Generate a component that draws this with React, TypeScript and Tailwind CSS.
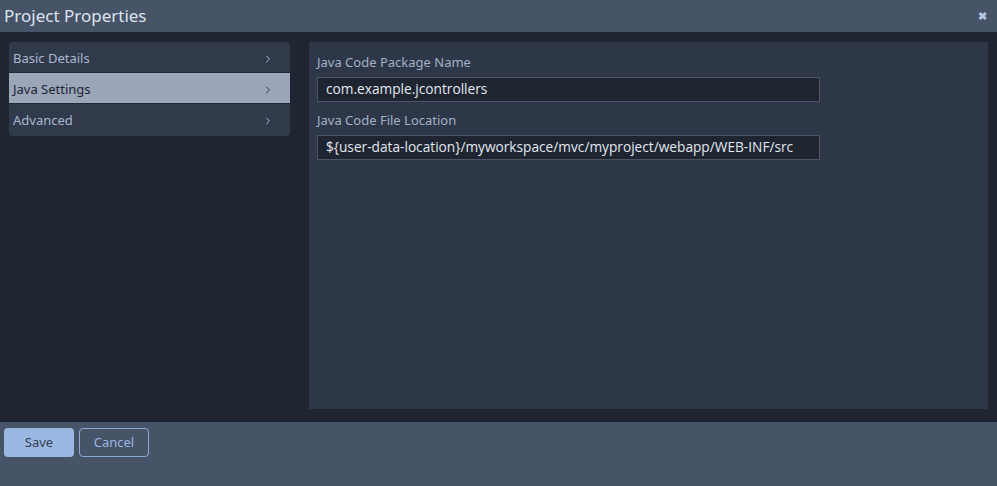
import { ChevronRight } from "lucide-react";

const menu = ["Basic Details", "Java Settings", "Advanced"];

export default function App() {
  const selected = "Java Settings";
  return (
    <div className="flex h-[486px] w-[997px] flex-col bg-[#1f2531] font-['Noto_Sans',sans-serif]">
      <div className="flex h-[32px] shrink-0 items-center justify-between bg-[#475366] pl-[4px] pr-[10px]">
        <span className="text-[17px] text-[#dce3ee]">Project Properties</span>
        <span className="text-[11px] font-bold text-[#b7c6e2]">✖</span>
      </div>

      <div className="flex flex-1 gap-[19px] pb-[13px] pl-[9px] pr-[9px] pt-[10px]">
        <div className="h-[94px] w-[281px] overflow-hidden rounded-[4px] bg-[#303a4b]">
          {menu.map((item, i) => (
            <div
              key={item}
              className={
                "flex h-[31px] items-center justify-between pl-[4px] pr-[16px] pt-[3px] text-[13px] " +
                (i < menu.length - 1 ? "border-b border-[#232a36] " : "") +
                (item === selected ? "bg-[#9ba6b9] text-[#1e2531]" : "text-[#a9b8cf]")
              }
            >
              <span>{item}</span>
              <ChevronRight size={12} strokeWidth={2} className={item === selected ? "text-[#2a3342]" : "text-[#a9b8cf]"} />
            </div>
          ))}
        </div>

        <div className="flex-1 bg-[#2d3748] px-[8px] pt-[11px]">
          <div className="text-[13px] leading-[18px] text-[#a3b1c6]">Java Code Package Name</div>
          <div className="mt-[6px] flex h-[25px] w-[503px] items-center border border-[#4b5567] bg-[#1e2531] px-[8px] font-['Open_Sans',sans-serif] text-[13.7px] text-[#e3e9f2]">
            com.example.jcontrollers
          </div>
          <div className="mt-[9px] text-[13px] leading-[18px] text-[#a3b1c6]">Java Code File Location</div>
          <div className="mt-[6px] flex h-[25px] w-[503px] items-center border border-[#4b5567] bg-[#1e2531] px-[8px] font-['Open_Sans',sans-serif] text-[13.7px] text-[#e3e9f2]">
            {"${user-data-location}/myworkspace/mvc/myproject/webapp/WEB-INF/src"}
          </div>
        </div>
      </div>

      <div className="flex h-[64px] shrink-0 gap-[5px] bg-[#475366] pl-[4px] pt-[6px]">
        <button className="h-[29px] w-[70px] rounded-[4px] bg-[#9ab8e2] text-[13px] text-[#334155]">Save</button>
        <button className="h-[29px] w-[70px] rounded-[4px] border border-[#8eaad6] text-[13px] text-[#9ab8e2]">Cancel</button>
      </div>
    </div>
  );
}
